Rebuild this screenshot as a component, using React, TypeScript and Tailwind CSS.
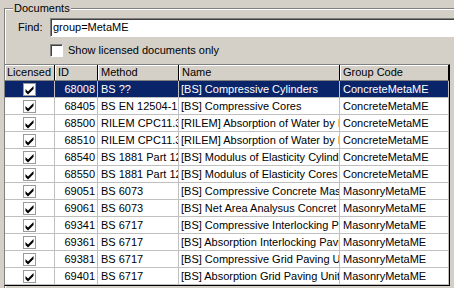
import React from 'react';

type Row = { id: string; method: string; name: string; group: string };

// strings kept to what the narrow columns actually show
const ROWS: Row[] = [
  { id: '68008', method: 'BS ??', name: '[BS] Compressive Cylinders', group: 'ConcreteMetaME' },
  { id: '68405', method: 'BS EN 12504-1', name: '[BS] Compressive Cores', group: 'ConcreteMetaME' },
  { id: '68500', method: 'RILEM CPC11.3-', name: '[RILEM] Absorption of Water by I', group: 'ConcreteMetaME' },
  { id: '68510', method: 'RILEM CPC11.3-', name: '[RILEM] Absorption of Water by I', group: 'ConcreteMetaME' },
  { id: '68540', method: 'BS 1881 Part 12', name: '[BS] Modulus of Elasticity Cylind', group: 'ConcreteMetaME' },
  { id: '68550', method: 'BS 1881 Part 12', name: '[BS] Modulus of Elasticity Cores', group: 'ConcreteMetaME' },
  { id: '69051', method: 'BS 6073', name: '[BS] Compressive Concrete Mas', group: 'MasonryMetaME' },
  { id: '69061', method: 'BS 6073', name: '[BS] Net Area Analysus Concret', group: 'MasonryMetaME' },
  { id: '69341', method: 'BS 6717', name: '[BS] Compressive Interlocking Pa', group: 'MasonryMetaME' },
  { id: '69361', method: 'BS 6717', name: '[BS] Absorption Interlocking Pavi', group: 'MasonryMetaME' },
  { id: '69381', method: 'BS 6717', name: '[BS] Compressive Grid Paving U', group: 'MasonryMetaME' },
  { id: '69401', method: 'BS 6717', name: '[BS] Absorption Grid Paving Unit', group: 'MasonryMetaME' },
];

const COLS = 'grid grid-cols-[50px_43px_81px_161px_109px]';

function CheckMark() {
  return (
    <svg width="11" height="11" viewBox="0 0 11 11">
      <path d="M1.5 5 L4 7.5 L9.5 2 L9.5 5 L4 10.5 L1.5 8 Z" fill="#000" />
    </svg>
  );
}

function CellCheck() {
  return (
    <div className="w-[13px] h-[13px] bg-white border border-[#9a9a9a] flex items-center justify-center">
      <CheckMark />
    </div>
  );
}

export default function App() {
  return (
    <div className="w-[454px] h-[288px] overflow-hidden bg-[#d4d0c8] pt-[8px] text-[11px] leading-[13px] text-black font-['Liberation_Sans',Arial,sans-serif]">
      {/* Documents group box */}
      <div className="relative ml-[4px] w-[470px] h-[300px] border-l border-t border-[#808080] shadow-[inset_1px_1px_0_#ffffff]">
        <span className="absolute -top-[7px] left-[8px] bg-[#d4d0c8] px-[1px]">Documents</span>

        {/* Find */}
        <div className="flex items-center mt-[9px] h-[19px]">
          <span className="ml-[13px] w-[32px]">Find:</span>
          <div className="w-[420px] h-[19px] bg-white border-t border-l border-[#808080] border-b border-r border-b-white border-r-white shadow-[inset_1px_1px_0_#404040] flex items-center pl-[2px]">
            group=MetaME
          </div>
        </div>

        {/* Licensed only */}
        <div className="flex items-center mt-[7px] ml-[45px] h-[13px]">
          <div className="w-[13px] h-[13px] bg-white border-t border-l border-[#808080] border-b border-r border-b-white border-r-white shadow-[inset_1px_1px_0_#404040]" />
          <span className="ml-[5px]">Show licensed documents only</span>
        </div>

        {/* Table */}
        <div className="mt-[7px] -ml-[1px] w-[446px] h-[222px] border-l border-t border-[#808080] border-r border-b border-r-black border-b-black bg-white overflow-hidden">
          <div className={`${COLS} h-[16px] bg-[#d4d0c8]`}>
            {['Licensed', 'ID', 'Method', 'Name', 'Group Code'].map((h, i) => (
              <div
                key={h}
                className={`border-r border-b border-r-black border-b-[#808080] shadow-[inset_1px_1px_0_#ffffff] flex items-center whitespace-nowrap overflow-hidden ${i === 0 ? 'pl-[2px]' : 'pl-[3px]'}`}
              >
                {h}
              </div>
            ))}
          </div>

          {ROWS.map((r, i) => {
            const sel = i === 0;
            return (
              <div key={r.id} className={`${COLS} h-[17px] ${sel ? 'bg-[#0a246a] text-white' : 'bg-white'}`}>
                <div className="border-r border-b border-[#c0c0c0] flex items-center justify-center">
                  <CellCheck />
                </div>
                <div className="border-r border-b border-[#c0c0c0] flex items-center justify-end pr-[2px] whitespace-nowrap overflow-hidden">
                  {r.id}
                </div>
                <div className="border-r border-b border-[#c0c0c0] flex items-center pl-[3px] whitespace-nowrap overflow-hidden">
                  {r.method}
                </div>
                <div className="border-r border-b border-[#c0c0c0] flex items-center pl-[2px] whitespace-nowrap overflow-hidden">
                  {r.name}
                </div>
                <div className="border-r border-b border-[#c0c0c0] flex items-center pl-[3px] whitespace-nowrap overflow-hidden">
                  {r.group}
                </div>
              </div>
            );
          })}
        </div>
      </div>
    </div>
  );
}
